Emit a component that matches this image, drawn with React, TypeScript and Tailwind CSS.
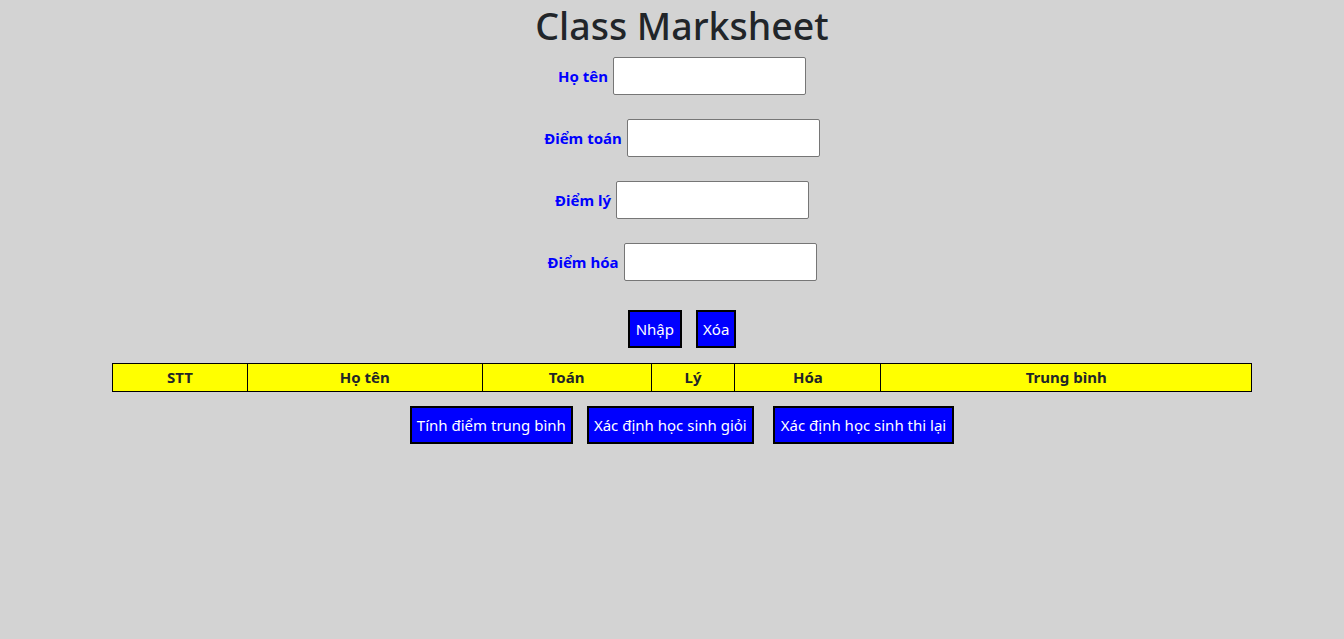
export default function App() {
  const fields = ["Họ tên", "Điểm toán", "Điểm lý", "Điểm hóa"];
  const cols = [
    { label: "STT", w: "w-[135px]" },
    { label: "Họ tên", w: "w-[235px]" },
    { label: "Toán", w: "w-[169px]" },
    { label: "Lý", w: "w-[84px]" },
    { label: "Hóa", w: "w-[146px]" },
    { label: "Trung bình", w: "w-[371px]" },
  ];

  return (
    <div
      className="min-h-[639px] bg-[#d3d3d3] pl-[20px] flex flex-col items-center text-[#212529]"
      style={{ fontFamily: '"Noto Sans", sans-serif' }}
    >
      <h1 className="mt-[2px] text-[37.5px] leading-[48px] h-[48px] font-medium">Class Marksheet</h1>

      <div className="mt-[7px] flex flex-col items-center gap-[24px]">
        {fields.map((f) => (
          <div key={f} className="flex items-center gap-[5px]">
            <label className="text-[15px] font-bold text-[#0000ff]">{f}</label>
            <input
              type="text"
              className="w-[193px] h-[38px] bg-white border border-[#767676] rounded-[2px]"
            />
          </div>
        ))}
      </div>

      <div className="mt-[29px] flex gap-[14px]">
        <button className="h-[38px] px-[6px] bg-[#0000ff] text-white text-[15px] border-2 border-black">
          Nhập
        </button>
        <button className="h-[38px] px-[5px] bg-[#0000ff] text-white text-[15px] border-2 border-black">
          Xóa
        </button>
      </div>

      <table className="mt-[15px] w-[1140px] border-collapse">
        <thead>
          <tr className="bg-[#ffff00]">
            {cols.map((c) => (
              <th
                key={c.label}
                className={`${c.w} h-[28px] p-0 border border-black text-[15px] font-bold text-center`}
              >
                {c.label}
              </th>
            ))}
          </tr>
        </thead>
      </table>

      <div className="mt-[14px] flex">
        <button className="h-[38px] px-[5px] bg-[#0000ff] text-white text-[15px] border-2 border-black">
          Tính điểm trung bình
        </button>
        <button className="ml-[14px] h-[38px] px-[5px] bg-[#0000ff] text-white text-[15px] border-2 border-black">
          Xác định học sinh giỏi
        </button>
        <button className="ml-[19px] h-[38px] px-[6px] bg-[#0000ff] text-white text-[15px] border-2 border-black">
          Xác định học sinh thi lại
        </button>
      </div>
    </div>
  );
}
